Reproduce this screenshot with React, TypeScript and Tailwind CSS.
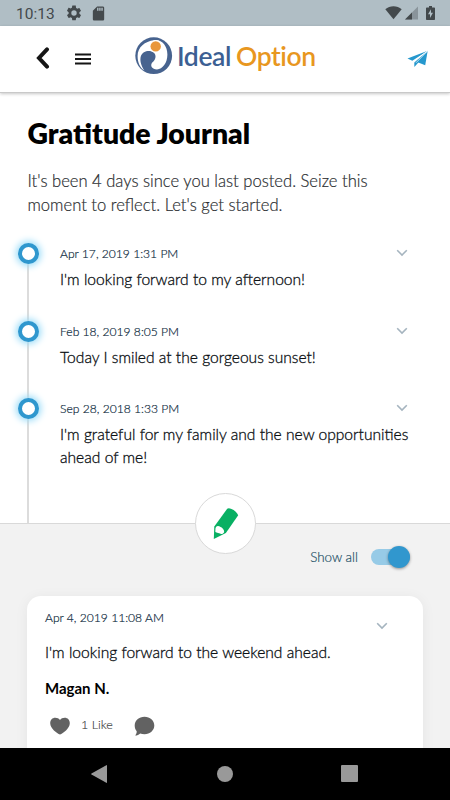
import type { ReactNode } from "react";

const entries = [
  { date: "Apr 17, 2019 1:31 PM", lines: ["I'm looking forward to my afternoon!"] },
  { date: "Feb 18, 2019 8:05 PM", lines: ["Today I smiled at the gorgeous sunset!"] },
  {
    date: "Sep 28, 2018 1:33 PM",
    lines: ["I'm grateful for my family and the new opportunities", "ahead of me!"],
  },
];

function Chevron() {
  return (
    <svg width="12" height="8" viewBox="0 0 12 8" fill="none" stroke="#a5b4bf" strokeWidth="1.6">
      <path d="M1.2 1.2 6 6l4.8-4.8" />
    </svg>
  );
}

function StatusBar() {
  return (
    <div className="flex h-[26px] shrink-0 items-center bg-[#b0bec5] pl-4 pr-[15px] text-[#43494c]">
      <span className="w-[52px] whitespace-nowrap pt-px font-[Roboto,sans-serif] text-[15.5px] leading-[26px]">10:13</span>
      <svg className="-ml-[3px]" width="18" height="18" viewBox="0 0 24 24" fill="currentColor">
        <path d="M19.14 12.94c.04-.3.06-.61.06-.94s-.02-.64-.07-.94l2.03-1.58a.49.49 0 0 0 .12-.61l-1.92-3.32a.49.49 0 0 0-.59-.22l-2.39.96a7 7 0 0 0-1.62-.94l-.36-2.54A.48.48 0 0 0 13.92 2h-3.84a.48.48 0 0 0-.47.41l-.36 2.54c-.59.24-1.13.57-1.62.94l-2.39-.96a.48.48 0 0 0-.59.22L2.74 8.87a.48.48 0 0 0 .12.61l2.03 1.58a7 7 0 0 0 0 1.88l-2.03 1.58a.49.49 0 0 0-.12.61l1.92 3.32c.12.22.37.29.59.22l2.39-.96c.5.38 1.03.7 1.62.94l.36 2.54c.05.24.24.41.48.41h3.84c.24 0 .44-.17.47-.41l.36-2.54a7 7 0 0 0 1.62-.94l2.39.96c.22.08.47 0 .59-.22l1.92-3.32a.48.48 0 0 0-.12-.61zM12 15.6a3.6 3.6 0 1 1 0-7.2 3.6 3.6 0 0 1 0 7.2" />
      </svg>
      <svg className="ml-[7px]" width="17" height="17" viewBox="0 0 24 24" fill="currentColor">
        <path d="M18 2h-8L4.02 8 4 20c0 1.1.9 2 2 2h12c1.1 0 2-.9 2-2V4c0-1.1-.9-2-2-2m-6 6h-2V4h2zm3 0h-2V4h2zm3 0h-2V4h2z" />
      </svg>
      <svg className="ml-auto" width="17" height="14" viewBox="0 0 17 14" fill="currentColor">
        <path d="M8.5 13.2.3 3.2C2.6 1.3 5.5.3 8.5.3s5.9 1 8.2 2.9z" />
      </svg>
      <svg className="ml-[3px]" width="13" height="14" viewBox="0 0 13 14" fill="currentColor">
        <path d="M13 .5v13H0z" opacity=".35" />
        <path d="M7 6.5v7H0z" />
      </svg>
      <svg className="ml-2" width="9" height="14" viewBox="0 0 9 14">
        <path d="M3 0h3v1.5h2.2q.8 0 .8.8v10.9q0 .8-.8.8H.8q-.8 0-.8-.8V2.3q0-.8.8-.8H3z" fill="currentColor" />
        <path d="M5 3.3 2 8.3h2V12l3-5.2H5z" fill="#b0bec5" />
      </svg>
    </div>
  );
}

function Logo() {
  return (
    <div className="ml-[44px] flex items-center pb-[5px]">
      <svg width="38" height="38" viewBox="0 0 38 38">
        <circle cx="18.7" cy="18.7" r="18.4" fill="#47638f" />
        <path
          d="M19 3.2C27 2 32.3 9 32.4 17.5c0 8.5-4.9 14.7-10.4 15-5-.2-7-3.7-5-6.7 3.5-2.5 5-7 1.7-10.2C15 12.4 7.6 13.8 5.9 19c-1.2 4-.2 9 3.4 14.6C4.5 30 2.6 25 2.6 19 2.6 10 10 4.2 19 3.2z"
          fill="#fff"
        />
        <circle cx="20.7" cy="9.4" r="6.3" fill="#fff" />
        <circle cx="20.7" cy="9.4" r="5.2" fill="#e9973c" />
      </svg>
      <div className="ml-[4px] flex gap-[5px] text-[26.5px] leading-9 font-semibold tracking-[-0.4px]">
        <span className="text-[#3c5f93]">Ideal</span>
        <span className="text-[#e8971f]">Option</span>
      </div>
    </div>
  );
}

function Header() {
  return (
    <header className="relative z-10 flex h-[67px] shrink-0 items-center border-b border-[#c9c9c9] bg-white pb-[2px] pl-9 pr-[22px] shadow-[0_1px_3px_rgba(0,0,0,0.22)]">
      <svg width="14" height="22" viewBox="0 0 14 22" fill="none" stroke="#151515" strokeWidth="4" strokeLinecap="round">
        <path d="M11 2.4 3 11l8 8.6" />
      </svg>
      <svg className="mt-px ml-[25px]" width="16" height="12" viewBox="0 0 16 12" fill="#151515">
        <path d="M0 .5h16v2H0zM0 5h16v2H0zM0 9.5h16v2H0z" />
      </svg>
      <Logo />
      <svg className="mt-px ml-auto" width="21" height="18" viewBox="0 0 21 18" fill="#2598ce">
        <path d="M20.7.8.5 8.5l4.8 2.3z" />
        <path d="M20.7.8 7.3 12.5V17l3-3.3z" />
        <path d="m20.7.8-2.5 14.5L10 12z" />
        <path d="M20.7.8 6.5 11.6M20.7.8 9 12.8" stroke="#fff" strokeWidth=".7" />
      </svg>
    </header>
  );
}

function Entry({ date, children }: { date: string; children: ReactNode }) {
  return (
    <li className="flex h-[77.5px]">
      {/* timeline marker */}
      <span className="z-10 mt-[-2px] ml-[18px] size-[21px] shrink-0 rounded-full border-4 border-[#2f97ce] bg-white shadow-[0_0_7px_2px_#9bdcf8]" />
      <div className="ml-[21px] w-[336px] shrink-0 whitespace-nowrap">
        <p className="text-[12.1px] leading-[18px] font-light text-[#0f2b40] [-webkit-text-stroke:0.2px]">{date}</p>
        <div className="mt-[5px] text-[15.6px] leading-[23px] font-light text-[#0b0f13] [-webkit-text-stroke:0.3px]">
          {children}
        </div>
      </div>
      <div className="pt-1">
        <Chevron />
      </div>
    </li>
  );
}

function Journal() {
  return (
    <section className="relative h-[430px] shrink-0 bg-white pt-[21px]">
      <h1 className="pl-[27.5px] text-[28.4px] leading-[38px] font-extrabold text-black">Gratitude Journal</h1>
      <p className="mt-[17px] pl-[27.5px] text-[16.6px] leading-6 font-light text-[#2c2f32] [-webkit-text-stroke:0.2px]">
        It's been 4 days since you last posted. Seize this
        <br />
        moment to reflect. Let's get started.
      </p>
      <div className="absolute top-[162px] bottom-0 left-[27px] w-[2px] bg-[#dcdcdc]" />
      <ul className="mt-[28px]">
        {entries.map((entry) => (
          <Entry key={entry.date} date={entry.date}>
            {entry.lines.map((line) => (
              <p key={line}>{line}</p>
            ))}
          </Entry>
        ))}
      </ul>
      <button className="absolute -bottom-[31px] left-[195px] z-10 flex size-[61px] items-center justify-center rounded-full border border-[#d9d9d9] bg-white">
        <svg width="26" height="32" viewBox="0 0 26 32">
          <path d="M14.2.8Q15.300-.2 18.500.9 23 2.500 25.200 7.300L12.900 25 .8 31l.5-12.400z" fill="#08b063" />
          <path d="M2.500 20q.8-2.200 2.500-2c3.500.5 7 4 6 6.500q-1.500 2-3 1.500c-2.500-1.500-5.500-1-5.700-2.500z" fill="#fff" />
        </svg>
      </button>
    </section>
  );
}

function SharedCard() {
  return (
    <article className="mr-[27px] ml-[27px] h-[170px] rounded-[14px] bg-white pt-[12px] pr-[35px] pl-[18px] shadow-[0_2px_14px_rgba(0,0,0,0.06)]">
      <div className="flex justify-between">
        <p className="text-[12.1px] leading-5 font-light text-[#0f2b40] [-webkit-text-stroke:0.2px]">
          Apr 4, 2019 11:08 AM
        </p>
        <div className="pt-[14px]">
          <Chevron />
        </div>
      </div>
      <p className="mt-[10px] text-[15.6px] leading-6 font-light text-[#0b0f13] [-webkit-text-stroke:0.3px]">
        I'm looking forward to the weekend ahead.
      </p>
      <p className="mt-[12px] text-[15px] leading-6 font-bold text-black">Magan N.</p>
      <div className="mt-[16px] flex items-center text-[#626262]">
        <svg className="ml-[5px]" width="20" height="18" viewBox="0 0 20 18" fill="currentColor">
          <path d="M10 17.500C7 16.300.2 11.500.2 6.200.2 3 2.300.8 5.300.8c2 0 3.600.9 4.700 2.200C11.100 1.700 12.700.8 14.700.8c3 0 5.100 2.200 5.100 5.400 0 5.300-6.800 10.100-9.800 11.300" />
        </svg>
        <span className="-mt-[2px] ml-[11px] text-[12.5px] leading-5 font-light text-[#404040] [-webkit-text-stroke:0.15px]">
          1 Like
        </span>
        <svg className="ml-[21px]" width="21" height="20" viewBox="0 0 21 20" fill="currentColor">
          <path d="M10.500.8c5.500 0 9.800 3.900 9.800 8.700s-4.300 8.700-9.800 8.700c-1.600 0-3-.3-4.300-.8-1.200 1.200-3 2-5 2.100 1-1.300 1.600-2.500 1.500-4.200C1.400 13.800.700 11.800.700 9.500.700 4.700 5 .8 10.500.8" />
        </svg>
      </div>
    </article>
  );
}

function Feed() {
  return (
    <section className="h-[225px] shrink-0 overflow-hidden border-t border-[#d9d9d9] bg-[#f2f2f2]">
      <div className="flex h-[72px] items-center justify-end pr-10 pb-[6px]">
        <span className="text-[13.4px] font-light text-[#1d4f66] [-webkit-text-stroke:0.2px]">Show all</span>
        <span className="ml-[13px] flex h-4 w-[39px] items-center justify-end rounded-full bg-[#97cbe7]">
          <span className="size-[22px] shrink-0 rounded-full bg-[#3197ce] shadow-[0_1px_3px_rgba(0,0,0,0.4)]" />
        </span>
      </div>
      <SharedCard />
    </section>
  );
}

function NavBar() {
  return (
    <nav className="flex h-[52px] shrink-0 items-center justify-between bg-black pr-[92px] pb-px pl-[91px]">
      <svg width="16" height="18" viewBox="0 0 16 18" fill="#999">
        <path d="M15.300.2q.7-.3.700.5v16.600q0 .8-.7.500L.5 9.600Q-.2 9 .5 8.400z" />
      </svg>
      <span className="ml-px size-4 rounded-full bg-[#999]" />
      <span className="size-[17px] rounded-[1px] bg-[#999]" />
    </nav>
  );
}

export default function App() {
  return (
    <div className="flex h-[800px] w-[450px] flex-col overflow-hidden bg-white font-[Lato,sans-serif]">
      <StatusBar />
      <Header />
      <Journal />
      <Feed />
      <NavBar />
    </div>
  );
}
